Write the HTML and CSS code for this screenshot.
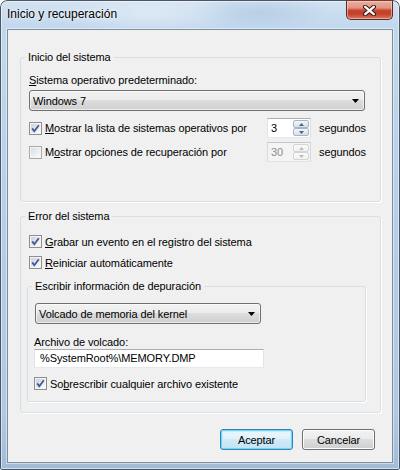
FILE: index.html
```html
<!DOCTYPE html>
<html lang="es">
<head>
<meta charset="utf-8">
<title>Inicio y recuperación</title>
<link rel="stylesheet" href="styles.css">
</head>
<body>
<div class="window">
  <div class="titlebar">
    <div class="title">Inicio y recuperación</div>
    <div class="close">
      <svg width="13" height="11" viewBox="0 0 13 11"><path d="M2.2 1.8 L10.8 9.2 M10.8 1.8 L2.2 9.2" stroke="#3b1a16" stroke-width="4.4" stroke-linecap="round" fill="none"/><path d="M2.2 1.8 L10.8 9.2 M10.8 1.8 L2.2 9.2" stroke="#fff" stroke-width="2.3" stroke-linecap="round" fill="none"/></svg>
    </div>
  </div>
  <div class="client">
    <fieldset class="group g1">
      <legend>Inicio del sistema</legend>
      <div class="label"><u>S</u>istema operativo predeterminado:</div>
      <div class="combo combo-os"><span>Windows 7</span><svg class="arrow" width="7" height="4" viewBox="0 0 7 4"><path d="M0 0H7L3.5 4Z"/></svg></div>
      <div class="row timed first">
        <span class="cb"><svg width="11" height="11" viewBox="0 0 11 11"><path d="M2.2 5.4 L4.3 8.2 L8.8 2.3" stroke="#42599a" stroke-width="1.8" fill="none"/></svg></span>
        <span class="cb-text"><u>M</u>ostrar la lista de sistemas operativos por</span>
        <div class="spin">
          <span class="spin-val">3</span>
          <span class="spin-btns">
            <span class="spin-btn"><svg width="5" height="3" viewBox="0 0 5 3"><path d="M0 3L2.5 0L5 3Z"/></svg></span>
            <span class="spin-btn"><svg width="5" height="3" viewBox="0 0 5 3"><path d="M0 0L5 0L2.5 3Z"/></svg></span>
          </span>
        </div>
        <span class="unit">segundos</span>
      </div>
      <div class="row timed second">
        <span class="cb off"></span>
        <span class="cb-text">M<u>o</u>strar opciones de recuperación por</span>
        <div class="spin disabled">
          <span class="spin-val">30</span>
          <span class="spin-btns">
            <span class="spin-btn"><svg width="5" height="3" viewBox="0 0 5 3"><path d="M0 3L2.5 0L5 3Z"/></svg></span>
            <span class="spin-btn"><svg width="5" height="3" viewBox="0 0 5 3"><path d="M0 0L5 0L2.5 3Z"/></svg></span>
          </span>
        </div>
        <span class="unit">segundos</span>
      </div>
    </fieldset>

    <fieldset class="group g2">
      <legend>Error del sistema</legend>
      <div class="row check">
        <span class="cb"><svg width="11" height="11" viewBox="0 0 11 11"><path d="M2.2 5.4 L4.3 8.2 L8.8 2.3" stroke="#42599a" stroke-width="1.8" fill="none"/></svg></span>
        <span class="cb-text"><u>G</u>rabar un evento en el registro del sistema</span>
      </div>
      <div class="row check next">
        <span class="cb"><svg width="11" height="11" viewBox="0 0 11 11"><path d="M2.2 5.4 L4.3 8.2 L8.8 2.3" stroke="#42599a" stroke-width="1.8" fill="none"/></svg></span>
        <span class="cb-text"><u>R</u>einiciar automáticamente</span>
      </div>
      <fieldset class="group inner">
        <legend>Escribir información de depuración</legend>
        <div class="combo combo-dump"><span>Volcado de memoria del kernel</span><svg class="arrow" width="7" height="4" viewBox="0 0 7 4"><path d="M0 0H7L3.5 4Z"/></svg></div>
        <div class="label small">Archivo de volcado:</div>
        <div class="textbox">%SystemRoot%\MEMORY.DMP</div>
        <div class="row check overwrite">
          <span class="cb"><svg width="11" height="11" viewBox="0 0 11 11"><path d="M2.2 5.4 L4.3 8.2 L8.8 2.3" stroke="#42599a" stroke-width="1.8" fill="none"/></svg></span>
          <span class="cb-text">So<u>b</u>rescribir cualquier archivo existente</span>
        </div>
      </fieldset>
    </fieldset>

    <div class="buttons">
      <div class="btn default">Aceptar</div>
      <div class="btn">Cancelar</div>
    </div>
  </div>
</div>
</body>
</html>
```

FILE: styles.css
```css
html, body {
  margin: 0;
  padding: 0;
  background: #ffffff;
}

body {
  font-family: "Liberation Sans", Arial, sans-serif;
  font-size: 11px;
  color: #000;
}

.window {
  width: 400px;
  height: 470px;
  box-sizing: border-box;
  border-radius: 7px 7px 2px 2px;
  background:
    radial-gradient(ellipse 90px 22px at 150px 14px, rgba(255,255,255,0.35), rgba(255,255,255,0) 100%),
    radial-gradient(ellipse 70px 18px at 260px 12px, rgba(150,180,210,0.35), rgba(150,180,210,0) 100%),
    linear-gradient(to bottom, #d2e2f2 0px, #c1d7ed 29px, #b7cfe8 200px, #aec8e4 420px, #a2bcd8 470px);
  box-shadow: inset 0 0 0 1px #4a5663, inset 0 0 0 2px rgba(255,255,255,0.5);
  display: flex;
  flex-direction: column;
  overflow: hidden;
}

.titlebar {
  height: 29px;
  display: flex;
  justify-content: space-between;
  align-items: flex-start;
  flex: none;
}

.title {
  font-size: 12px;
  line-height: 29px;
  padding-left: 7px;
  letter-spacing: 0;
  color: #000;
  text-shadow: 0 0 6px rgba(255,255,255,0.9), 0 0 2px rgba(255,255,255,0.8);
}

.close {
  width: 47px;
  height: 20px;
  margin-right: 7px;
  box-sizing: border-box;
  border: 1px solid #5a2a24;
  border-top-color: #7a3a32;
  border-radius: 0 0 5px 5px;
  background: linear-gradient(to bottom, #eab0a2 0%, #df9584 38%, #c9452f 52%, #c24028 70%, #d9745c 100%);
  box-shadow: inset 0 0 0 1px rgba(255,220,210,0.55);
  display: flex;
  align-items: center;
  justify-content: center;
}

.client {
  margin: 0 7px 7px 7px;
  flex: 1;
  box-sizing: border-box;
  border: 1px solid #7d8e9f;
  box-shadow: 0 0 0 1px rgba(255,255,255,0.45);
  background: #f0f0f0;
  padding: 0;
  display: flex;
  flex-direction: column;
}

u {
  text-decoration: underline;
  text-decoration-thickness: 1px;
  text-underline-offset: 1px;
}

.group {
  margin: 0;
  min-inline-size: 0;
  border: 1px solid #d5dfe5;
  border-radius: 3px;
  box-shadow: 1px 1px 0 #ffffff;
}

.group legend {
  padding: 0 3px;
  margin-left: -4px;
  line-height: 15px;
  letter-spacing: -0.1px;
}

.g1 {
  margin: 20px 11px 0 12px;
  padding: 8px 15px 39px 8px;
}

.g2 {
  margin: 7px 11px 0 12px;
  padding: 9px 15px 10px 8px;
}

.inner {
  margin: 8px -1px 0 -2px;
  padding: 9px 8px 9px 6px;
}

.inner legend {
  margin-left: -2px;
}

.label {
  line-height: 15px;
  letter-spacing: -0.1px;
}

.label.small {
  line-height: 13px;
  margin-top: 12px;
}

.combo {
  height: 21px;
  box-sizing: border-box;
  border: 1px solid #707070;
  border-radius: 3px;
  background: linear-gradient(to bottom, #f2f2f2 0%, #ebebeb 50%, #dddddd 50%, #cfcfcf 100%);
  box-shadow: inset 0 0 0 1px rgba(255,255,255,0.6);
  display: flex;
  align-items: center;
  justify-content: space-between;
  padding: 0 5px 0 3px;
  letter-spacing: -0.1px;
}

.combo-os {
  margin-top: 2px;
}

.combo-dump {
  width: 226px;
  margin-left: 1px;
}

.arrow path {
  fill: #000;
}

.row {
  display: flex;
  align-items: center;
  letter-spacing: -0.1px;
}

.row.timed {
  height: 20px;
}

.row.first {
  margin-top: 7px;
}

.row.second {
  margin-top: 4px;
}

.row.check {
  height: 17px;
}

.row.next {
  margin-top: 4px;
}

.row.overwrite {
  margin-top: 7px;
}

.cb {
  width: 13px;
  height: 13px;
  flex: none;
  box-sizing: border-box;
  border: 1px solid #8e8f8f;
  background: linear-gradient(135deg, #c6ccd3 0%, #e1e4e8 45%, #f6f7f8 80%, #ffffff 100%);
  box-shadow: inset 0 0 0 1px #f4f4f4;
  display: flex;
  align-items: center;
  justify-content: center;
}

.cb svg {
  display: block;
}

.cb.off {
  border-color: #a9a9a9;
  background: linear-gradient(135deg, #d6d9dd 0%, #e8eaec 45%, #f7f7f7 80%, #ffffff 100%);
}

.cb-text {
  margin-left: 3px;
  flex: 1;
  white-space: nowrap;
}

.spin {
  width: 44px;
  height: 20px;
  flex: none;
  box-sizing: border-box;
  border: 1px solid;
  border-color: #abadb3 #dbdfe6 #e3e9ef #e2e3ea;
  background: #fff;
  padding: 1px;
  display: flex;
}

.spin-val {
  flex: 1;
  line-height: 16px;
  padding-left: 2px;
}

.spin-btns {
  width: 16px;
  display: flex;
  flex-direction: column;
}

.spin-btn {
  flex: 1;
  box-sizing: border-box;
  border: 1px solid #a7b4c4;
  border-radius: 2px;
  background: linear-gradient(to bottom, #f4f7fa 0%, #e4ebf2 50%, #d6e0ea 100%);
  display: flex;
  align-items: center;
  justify-content: center;
}

.spin-btn svg path {
  fill: #4d6185;
}

.spin.disabled {
  border-color: #c9c9c9 #dadada #e3e3e3 #dadada;
  background: #f4f4f4;
}

.spin.disabled .spin-val {
  color: #8d8d8d;
}

.spin.disabled .spin-btn {
  border-color: #d4d4d4;
  background: linear-gradient(to bottom, #fafafa 0%, #f2f2f2 100%);
}

.spin.disabled .spin-btn svg path {
  fill: #bcbcbc;
}

.unit {
  width: 46px;
  margin-left: 8px;
  flex: none;
  white-space: nowrap;
}

.textbox {
  width: 230px;
  height: 19px;
  box-sizing: border-box;
  border: 1px solid;
  border-color: #abadb3 #e2e3ea #e3e9ef #e2e3ea;
  background: #fff;
  line-height: 17px;
  padding-left: 5px;
  letter-spacing: -0.1px;
}

.buttons {
  margin: 16px 17px 0 0;
  display: flex;
  justify-content: flex-end;
  gap: 9px;
}

.btn {
  width: 73px;
  height: 21px;
  box-sizing: border-box;
  border: 1px solid #707070;
  border-radius: 3px;
  background: linear-gradient(to bottom, #f2f2f2 0%, #ebebeb 50%, #dddddd 50%, #cfcfcf 100%);
  box-shadow: inset 0 0 0 1px #fcfcfc;
  display: flex;
  align-items: center;
  justify-content: center;
  letter-spacing: -0.1px;
}

.btn.default {
  border-color: #3c7fb1;
  background: linear-gradient(to bottom, #eaf6fd 0%, #e0f1fb 50%, #d0eaf8 50%, #c3e3f5 100%);
  box-shadow: inset 0 0 0 1px #6ed6f9, inset 0 0 0 2px rgba(180,235,252,0.6);
}
```
